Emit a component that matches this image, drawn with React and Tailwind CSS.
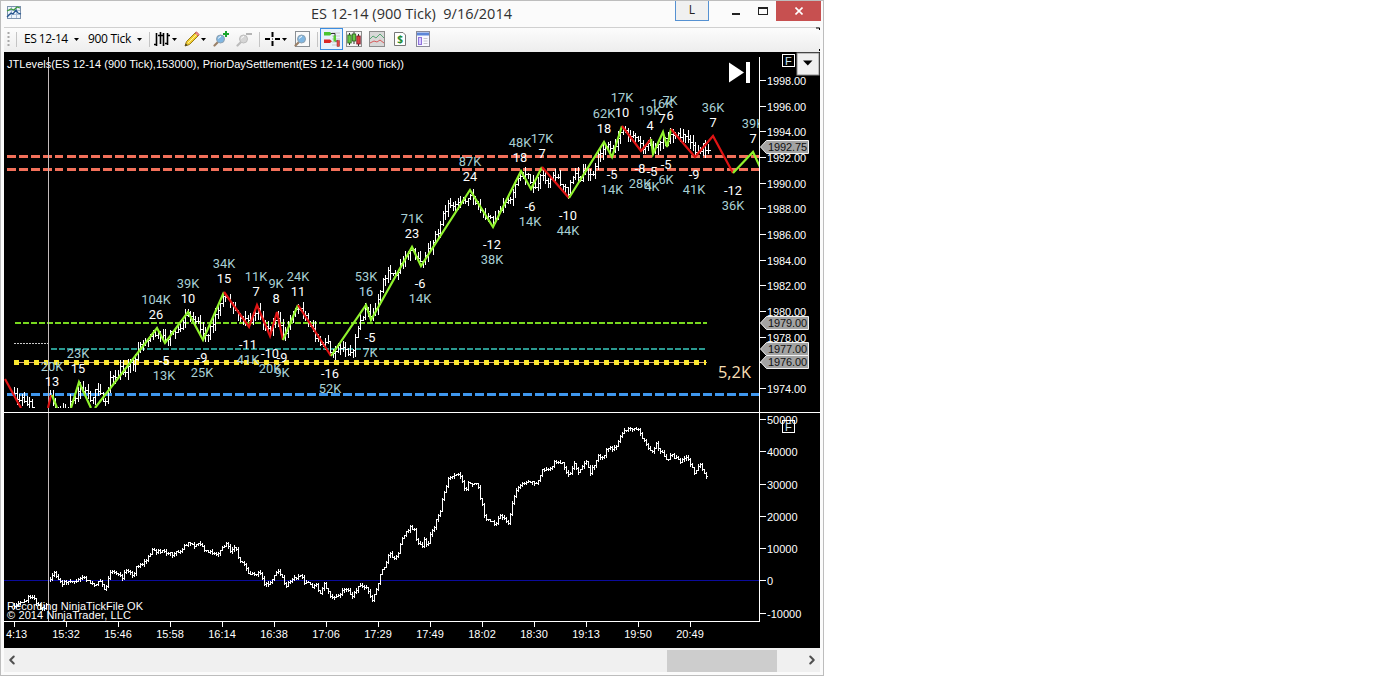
import { ChevronLeft, ChevronRight } from 'lucide-react'

const GREEN = '#8ff22c'
const RED = '#e01414'

// turning points of both series, in window coordinates
const PRICE_PRE = [[14,391],[18,403],[22,397],[25,406],[29,401],[32,406]]
const PRICE = [[50,397],[54,406],[57,412],[66,411],[69,402],[74,401],[79,385],[84,389],[88,394],[92,403],[95,387],[99,392],[103,402],[106,397],[109,382],[112,372],[116,379],[120,367],[124,374],[128,362],[133,364],[138,346],[143,342],[150,334],[157,332],[161,335],[165,339],[170,334],[178,329],[184,318],[188,315],[193,317],[198,324],[203,336],[208,332],[214,318],[219,304],[224,296],[228,299],[233,305],[238,317],[244,318],[249,323],[253,313],[257,308],[262,322],[266,328],[270,331],[277,316],[283,336],[287,326],[292,312],[298,309],[304,312],[310,325],[317,340],[322,343],[327,343],[331,352],[337,346],[342,346],[348,352],[353,349],[356,332],[361,318],[366,309],[371,315],[375,306],[378,294],[382,282],[388,271],[395,277],[402,260],[407,252],[412,250],[417,258],[421,263],[428,250],[435,237],[440,226],[442,213],[448,203],[453,205],[460,203],[465,202],[470,194],[475,201],[480,209],[483,217],[490,215],[493,223],[497,213],[507,202],[513,190],[517,180],[521,175],[527,175],[531,185],[537,184],[542,171],[547,183],[553,174],[560,181],[568,193],[572,176],[576,172],[580,181],[583,169],[592,173],[597,157],[604,146],[608,147],[612,153],[617,142],[622,130],[627,133],[632,136],[638,142],[642,147],[648,144],[651,142],[653,149],[656,144],[660,140],[663,136],[667,142],[671,133],[680,134],[688,137],[694,151],[699,150],[703,145],[708,152]]
const DELTA_PRE = [[14,605],[20,601],[25,602],[29,595],[35,600],[40,608],[44,607],[48,603]]
const DELTA = [[50,580],[53,571],[61,584],[67,581],[76,582],[80,577],[87,580],[93,584],[100,582],[105,591],[109,573],[115,572],[122,577],[127,569],[133,575],[137,565],[144,562],[152,550],[160,551],[172,554],[180,550],[188,542],[195,545],[200,544],[205,550],[217,553],[227,543],[230,550],[235,547],[239,560],[245,565],[248,573],[260,573],[265,585],[270,582],[277,570],[282,577],[285,587],[293,577],[302,576],[305,586],[307,580],[312,587],[315,583],[320,592],[324,583],[330,595],[335,598],[345,588],[352,595],[359,585],[367,587],[372,599],[377,587],[380,573],[385,567],[389,551],[393,560],[398,552],[402,538],[410,526],[414,530],[417,542],[422,546],[424,540],[427,546],[430,533],[433,530],[437,515],[440,512],[443,495],[448,478],[453,475],[459,474],[462,481],[465,490],[468,482],[477,483],[480,497],[485,518],[495,523],[500,515],[508,522],[512,503],[515,491],[523,482],[537,483],[542,470],[550,468],[555,461],[562,462],[569,477],[574,463],[578,473],[586,460],[590,472],[598,455],[603,458],[607,447],[615,448],[622,433],[627,427],[637,428],[642,437],[648,448],[652,450],[656,443],[660,450],[667,460],[671,454],[680,461],[687,457],[694,472],[700,463],[706,477],[708,473]]

const noise = n => {
  const v = Math.sin(n * 12.9898) * 43758.5453
  return v - Math.floor(v)
}

function at(points, x) {
  const i = Math.max(1, points.findIndex(p => p[0] >= x))
  const [x0, y0] = points[i - 1]
  const [x1, y1] = points[i]
  return y0 + ((y1 - y0) * (x - x0)) / (x1 - x0)
}

// open/high/low/close bars, each opening where the last one closed
function barPath(points, jitter, wick, step) {
  let d = ''
  let open = Math.round(points[0][1])
  const end = points[points.length - 1][0]
  for (let x = points[0][0]; x < end; x += step) {
    const px = Math.round(x)
    const close = Math.round(at(points, x) + (noise(x) - 0.5) * jitter)
    const hi = Math.min(open, close) - Math.round(noise(x + 0.3) * wick)
    const lo = Math.max(open, close) + Math.round(noise(x + 0.7) * wick) + 1
    d += `M${px + 0.5} ${hi}V${lo}M${px} ${close + 0.5}h${Math.ceil(step)}`
    open = close
  }
  return d
}

const ZIGZAG = [
  [RED, '5,379 21,408'], [RED, '48,408 51,395'], [GREEN, '52,395 57,408'], [GREEN, '71,408 79,382 91,408'],
  [GREEN, '95,408 157,328 165,343 188,312 203,340 224,292'],
  [RED, '224,292 249,327 257,305 270,336 277,312 283,340'],
  [GREEN, '283,340 298,305'], [RED, '298,305 331,356'],
  [GREEN, '331,356 366,305 371,320 412,247 421,266 470,190 493,227 521,171 531,189 542,167'],
  [RED, '542,167 569,198'], [GREEN, '569,198 604,142 612,157 622,126'],
  [RED, '622,126 641,151 651,139'], [GREEN, '651,139 653,154 663,132 667,147 671,129'],
  [RED, '671,129 695,157 713,136 733,173'], [GREEN, '733,173 753,152 760,167'],
]

// [x, swing, its baseline, volume, its baseline]
const SWINGS = [
  [52,'13',386,'20K',371], [78,'15',373,'23K',358], [156,'26',319,'104K',304], [164,'-5',365,'13K',380],
  [188,'10',303,'39K',288], [202,'-9',362,'25K',377], [224,'15',283,'34K',268], [248,'-11',349,'41K',364],
  [256,'7',296,'11K',281], [270,'-10',358,'20K',373], [276,'8',303,'9K',288], [282,'-9',362,'9K',377],
  [298,'11',296,'24K',281], [330,'-16',378,'52K',393], [366,'16',296,'53K',281], [370,'-5',342,'7K',357],
  [412,'23',238,'71K',223], [420,'-6',288,'14K',303], [470,'24',181,'87K',166], [492,'-12',249,'38K',264],
  [520,'18',162,'48K',147], [530,'-6',211,'14K',226], [542,'7',158,'17K',143], [568,'-10',220,'44K',235],
  [604,'18',133,'62K',118], [612,'-5',179,'14K',194], [622,'10',117,'17K',102], [640,'-8',173,'28K',188],
  [650,'4',130,'19K',115], [652,'-5',176,'4K',191], [662,'7',123,'16K',108], [666,'-5',169,'6K',184],
  [670,'6',120,'7K',105], [694,'-9',179,'41K',194], [713,'7',127,'36K',112], [733,'-12',195,'36K',210],
  [753,'7',143,'39K',128],
]

const PRICES = Array.from({ length: 13 }, (_, i) => [`${1998 - i * 2}.00`, Math.round(80 + i * 25.67) + 0.5])
const VOLUMES = [['50000',419.5],['40000',451.5],['30000',484.5],['20000',516.5],['10000',548.5],['0',580.5],['-10000',613.5]]
const TIMES = ['4:13','15:32','15:46','15:58','16:14','16:38','17:06','17:29','17:49','18:02','18:30','19:13','19:50','20:49']
const TAGS = [['1992.75',147],['1979.00',323],['1977.00',349],['1976.00',362]]

function FixedBox({ y }) {
  return (
    <g>
      <rect x="782.5" y={y + 0.5} width="12" height="12" fill="none" stroke="#fff" />
      <text x="785" y={y + 11} fontSize="11" fill="#cfe9f5">F</text>
    </g>
  )
}

function Chart() {
  return (
    <svg viewBox="4 52 816 596" width="816" height="596" className="block bg-black font-['Liberation_Sans',sans-serif]">
      <defs>
        <clipPath id="price"><rect x="4" y="52" width="756" height="356" /></clipPath>
      </defs>

      <g shapeRendering="crispEdges" fill="none">
        <path d="M6.5 156.5H759M6.5 169.5H759" stroke="#f2705a" strokeWidth="3" strokeDasharray="9 3" />
        <path d="M15 323H707" stroke="#78d81f" strokeWidth="2" strokeDasharray="6 2" />
        <path d="M51 349H707" stroke="#2a9990" strokeWidth="2" strokeDasharray="6 2" />
        <path d="M14 343.5H48" stroke="#c9c9c9" strokeDasharray="2 1" />
        <path d="M14 362.5H707" stroke="#e0a878" />
        <path d="M14 362.5H706" stroke="#fbe82e" strokeWidth="5" strokeDasharray="5 5" />
        <path d="M6.5 394.5H759" stroke="#3f97ee" strokeWidth="3" strokeDasharray="9 3" />
        <path d="M4 580.5H759" stroke="#0b0b9c" />
        <path d="M48.5 57V621" stroke="#c4bcbc" />
        <g stroke="#fff">
          <path d={barPath(PRICE_PRE, 6, 6, 2.5)} clipPath="url(#price)" />
          <path d={barPath(PRICE, 6, 7, 2.5)} clipPath="url(#price)" />
          <path d={barPath(DELTA_PRE, 3, 2.4, 2)} />
          <path d={barPath(DELTA, 3, 2, 2)} />
        </g>
      </g>

      <g clipPath="url(#price)">
        {ZIGZAG.map(([color, pts], i) => (
          <polyline key={i} points={pts} fill="none" stroke={color} strokeWidth="2.2" />
        ))}
        <g className="font-[Roboto,sans-serif]" fontSize="12.8" textAnchor="middle">
          {SWINGS.map(([x, swing, sy, vol, vy], i) => (
            <g key={i}>
              <text x={x} y={sy} fill={x === 366 ? '#add8e6' : '#fff'}>{swing}</text>
              <text x={x} y={vy} fill="#a9d0d5">{vol}</text>
            </g>
          ))}
        </g>
      </g>
      <text x="718" y="378" fontSize="16" fill="#f7dfb5" textLength="33" lengthAdjust="spacingAndGlyphs" className="font-['Open_Sans',sans-serif]">5,2K</text>
      <path d="M729 62.5L744 72.5L729 82.5ZM746 62h4v21h-4Z" fill="#fff" />

      <g shapeRendering="crispEdges" stroke="#fff" fill="none">
        <path d="M759.5 57V622M4 412.5H820M4 621.5H760" />
        {[...PRICES, ...VOLUMES].map(([label, y]) => <path key={label} d={`M760 ${y}h6`} />)}
        {TIMES.map((t, i) => <path key={t} d={`M${14.5 + i * 52} 622v5`} />)}
      </g>
      <g fontSize="11" fill="#fff">
        {PRICES.map(([label, y]) => <text key={label} x="767" y={y + 4.5} textLength="39">{label}</text>)}
        {VOLUMES.map(([label, y]) => <text key={label} x="767" y={y + 4.5}>{label}</text>)}
        {TIMES.map((t, i) => i === 0
          ? <text key={t} x="6" y="638" textLength="21">{t}</text>
          : <text key={t} x={14 + i * 52} y="638" textAnchor="middle">{t}</text>)}
        <text x="7" y="68" textLength="397">JTLevels(ES 12-14 (900 Tick),153000), PriorDaySettlement(ES 12-14 (900 Tick))</text>
        <text x="7" y="610" textLength="136">Recording NinjaTickFile OK</text>
        <text x="7" y="619" textLength="124">© 2014 NinjaTrader, LLC</text>
      </g>
      {TAGS.map(([label, y]) => (
        <g key={label}>
          <path d={`M760.5 ${y}L766.5 ${y - 6.5}H808.5V${y + 6.5}H766.5Z`} fill="#a3a3a3" stroke="#f0f0f0" />
          <text x="768" y={y + 4} fontSize="11" fill="#111" textLength="39">{label}</text>
        </g>
      ))}
      <FixedBox y={54} />
      <FixedBox y={420} />
      <g>
        <rect x="797" y="53" width="22" height="22" fill="#f0f0f0" stroke="#8c8c8c" />
        <path d="M803 60.5h9.5l-4.7 5Z" fill="#000" />
      </g>
    </svg>
  )
}

const Caret = ({ className = '' }) => (
  <svg width="5" height="3" viewBox="0 0 5 3" className={`shrink-0 ${className}`}><path d="M0 0h5L2.5 3Z" fill="#000" /></svg>
)
const Sep = ({ className = '' }) => <span className={`w-px h-[15px] shrink-0 bg-[#c4c4c4] ${className}`} />

function Icon({ className = '', children }) {
  return <svg width="16" height="16" viewBox="0 0 16 16" fill="none" className={`shrink-0 ${className}`}>{children}</svg>
}

function Lens({ gray }) {
  return (
    <g>
      <path d="M5 11L1.5 14.5" stroke={gray ? '#bbb' : '#9a8067'} strokeWidth="2.2" strokeLinecap="round" />
      <circle cx="7.5" cy="8" r="4" fill={gray ? '#d5d5d5' : '#7fb6e2'} stroke={gray ? '#bdbdbd' : '#8fa1b0'} />
      <path d="M5.5 7.5Q6 5.5 8 5.5" stroke="#fff" />
    </g>
  )
}

function Toolbar() {
  return (
    <div className="mx-[3px] h-[25px] pb-[2px] flex items-center border-t border-[#d0d0d0] bg-linear-to-b from-[#fcfcfc] to-[#ededed] font-['Open_Sans',sans-serif] text-[12px] text-black whitespace-nowrap">
      <svg width="3" height="15" className="ml-[3px] shrink-0"><path d="M1.5 0v15" stroke="#a8a8a8" strokeWidth="2" strokeDasharray="2 2" /></svg>
      <Sep className="ml-[6px]" />
      <span className="ml-[7px] w-[50px] tracking-[-0.5px]">ES 12-14</span>
      <Caret />
      <span className="ml-[9px] w-[49px] tracking-[-0.3px]">900 Tick</span>
      <Caret />
      <Sep className="ml-[7px]" />
      <Icon className="ml-[4px]">
        <path d="M2.5 2v13M0 13.5h2M6.5 1v12M4 4.5h5M9.5 2v13M13.5 2v12M11 12.5h2M13 4.5h3" stroke="#000" strokeWidth="1.6" />
      </Icon>
      <Caret className="ml-[2px]" />
      <Icon className="ml-[7px]">
        <path d="M1 15L2.5 10.5L11.5 1.5L14.5 4.5L5.5 13.5Z" fill="#f2cf33" stroke="#9a7b16" />
        <path d="M11 2L12.5 0.8L15.2 3.5L14 5Z" fill="#e88" stroke="#b55" strokeWidth=".7" />
        <path d="M4 12L12.5 3.5" stroke="#fff1a0" /><path d="M1 15l.8-2.5 1.7 1.7Z" fill="#333" />
      </Icon>
      <Caret className="ml-[1px]" />
      <Icon className="ml-[7px]"><Lens /><path d="M13 0v6M10 3h6" stroke="#18a52c" strokeWidth="2" /></Icon>
      <Icon className="ml-[7px]"><Lens gray /><path d="M10 3h6" stroke="#b5b5b5" strokeWidth="2" /></Icon>
      <Sep className="ml-[7px]" />
      <Icon className="ml-[5px]"><path d="M7.5 1v5M7.5 10v5M0 8h5M10 8h5" stroke="#000" strokeWidth="2" /><path d="M7 8h1" stroke="#000" /></Icon>
      <Caret className="ml-[1px]" />
      <Icon className="ml-[7px]"><rect x="1.5" y=".5" width="14" height="15" fill="#fafafa" stroke="#8a8f94" /><Lens /></Icon>
      <Sep className="ml-[7px]" />
      <span className="ml-[2px] w-[23px] h-[22px] shrink-0 grid place-items-center border border-[#3c8de0] bg-[#e8f2fc]">
        <Icon>
          <path d="M8 2h8M8 5h8M8 8h8M8 11h8M8 14h8" stroke="#c8c8c8" />
          <path d="M0 1h6l2 1.7L6 4.5H0Z" fill="#4bc52f" /><path d="M0 8.5h6l2 1.7L6 12H0Z" fill="#d92929" />
          <path d="M7 2.5h4V10h3" stroke="#333" />
          <rect x="9.5" y="4.5" width="2.5" height="6" fill="#5c3" />
          <rect x="13" y="9.5" width="2.5" height="6" fill="#e54848" stroke="#833" strokeWidth=".5" />
        </Icon>
      </span>
      <Icon className="ml-[3px]">
        <rect x=".5" y=".5" width="15" height="15" fill="#f4f4f4" stroke="#8d8d8d" />
        <path d="M3.5 2v12M8 1v12M12.5 3v12" stroke="#333" />
        <rect x="1.8" y="4" width="3.4" height="8" fill="#66c946" stroke="#286018" strokeWidth=".8" />
        <rect x="6.3" y="3" width="3.4" height="7" fill="#66c946" stroke="#286018" strokeWidth=".8" />
        <rect x="10.8" y="5" width="3.4" height="8" fill="#d94141" stroke="#712" strokeWidth=".8" />
      </Icon>
      <Icon className="ml-[7px]">
        <rect x=".5" y=".5" width="15" height="15" fill="#d8d8d8" stroke="#8d8d8d" />
        <path d="M1 8l3-3 3 2 4-4 4 4" stroke="#58a774" /><path d="M1 12l4-2 3 1 3-2 4 3" stroke="#d95b5b" />
      </Icon>
      <svg width="12" height="14" viewBox="0 0 12 14" className="ml-[9px] shrink-0">
        <path d="M.5.5H9L11.5 3V13.5H.5Z" fill="#fff" stroke="#777" />
        <text x="6" y="11" textAnchor="middle" fontSize="10" fontWeight="bold" fill="#238b2c">$</text>
      </svg>
      <Icon className="ml-[9px]">
        <rect x="1.5" y=".5" width="13" height="15" fill="#f8f8ff" stroke="#8b8b98" />
        <path d="M2 3h12" stroke="#5c86d8" strokeWidth="3" /><rect x="3.5" y="6.5" width="3" height="7" fill="#d9ccff" stroke="#8f72db" />
        <path d="M8.5 7.5h4M8.5 10h4M8.5 12.5h4" stroke="#c4c4cc" />
      </Icon>
      <svg width="4" height="24" viewBox="0 0 4 24" className="ml-auto shrink-0"><path d="M0 1h3.5V3M3.5 22v2" stroke="#000" fill="none" /></svg>
    </div>
  )
}

function TitleBar() {
  return (
    <div className="h-[26px] flex items-start shrink-0">
      <Icon className="ml-[5px] mt-[4px]">
        <rect x="1.5" y="1.5" width="13" height="12" fill="#eef4fb" stroke="#7c92ad" />
        <path d="M2 5.5h12M2 9.5h12M5.5 2v11M10.5 2v11" stroke="#a9bdd6" />
        <path d="M1 6l4-2 3 1 3-3 3 1" stroke="#3f9b3d" strokeWidth="1.3" /><path d="M1 12l4-4 2 1 3-4 2 3 3 1" stroke="#27568f" strokeWidth="1.3" />
      </Icon>
      <div className="ml-[289px] mt-[2px] w-[364px] font-['Open_Sans',sans-serif] text-[14.5px] leading-[21px] text-[#303030] whitespace-pre">ES 12-14 (900 Tick)  9/16/2014</div>
      <div className="w-[34px] h-5 border border-t-0 border-[#5591d2] bg-[#f0f0f0] text-center font-['Open_Sans',sans-serif] text-[12px] leading-[18px] text-[#222]">L</div>
      <svg width="67" height="20" viewBox="0 0 67 20" shapeRendering="crispEdges"><path d="M23 13h8" stroke="#222" strokeWidth="2" /><path d="M49.5 7.5h9v6h-9Z" fill="none" stroke="#222" /><path d="M49 7h10" stroke="#222" strokeWidth="2" /></svg>
      <div className="w-[45px] h-5 bg-[#c75050] grid place-items-center">
        <svg width="8" height="8" viewBox="0 0 8 8"><path d="M.5.5l7 7M7.5.5l-7 7" stroke="#fff" strokeWidth="1.6" /></svg>
      </div>
    </div>
  )
}

export default function App() {
  return (
    <div className="w-[1378px] h-[676px] bg-white overflow-hidden">
      <div className="w-[824px] h-[676px] border border-[#bdbdbd] bg-[#fbfbfb] flex flex-col">
        <TitleBar />
        <Toolbar />
        <div className="ml-[3px] w-[816px] h-[596px] shrink-0"><Chart /></div>
        <div className="mx-[3px] h-6 flex items-center bg-[#f0f0f0] text-[#505050]">
          <ChevronLeft size={14} strokeWidth={3.5} className="ml-[1px] mb-px" />
          <div className="ml-[648px] mt-px w-[110px] h-[22px] bg-[#cdcdcd]" />
          <ChevronRight size={14} strokeWidth={3.5} className="ml-[28px] mb-px" />
        </div>
      </div>
    </div>
  )
}
